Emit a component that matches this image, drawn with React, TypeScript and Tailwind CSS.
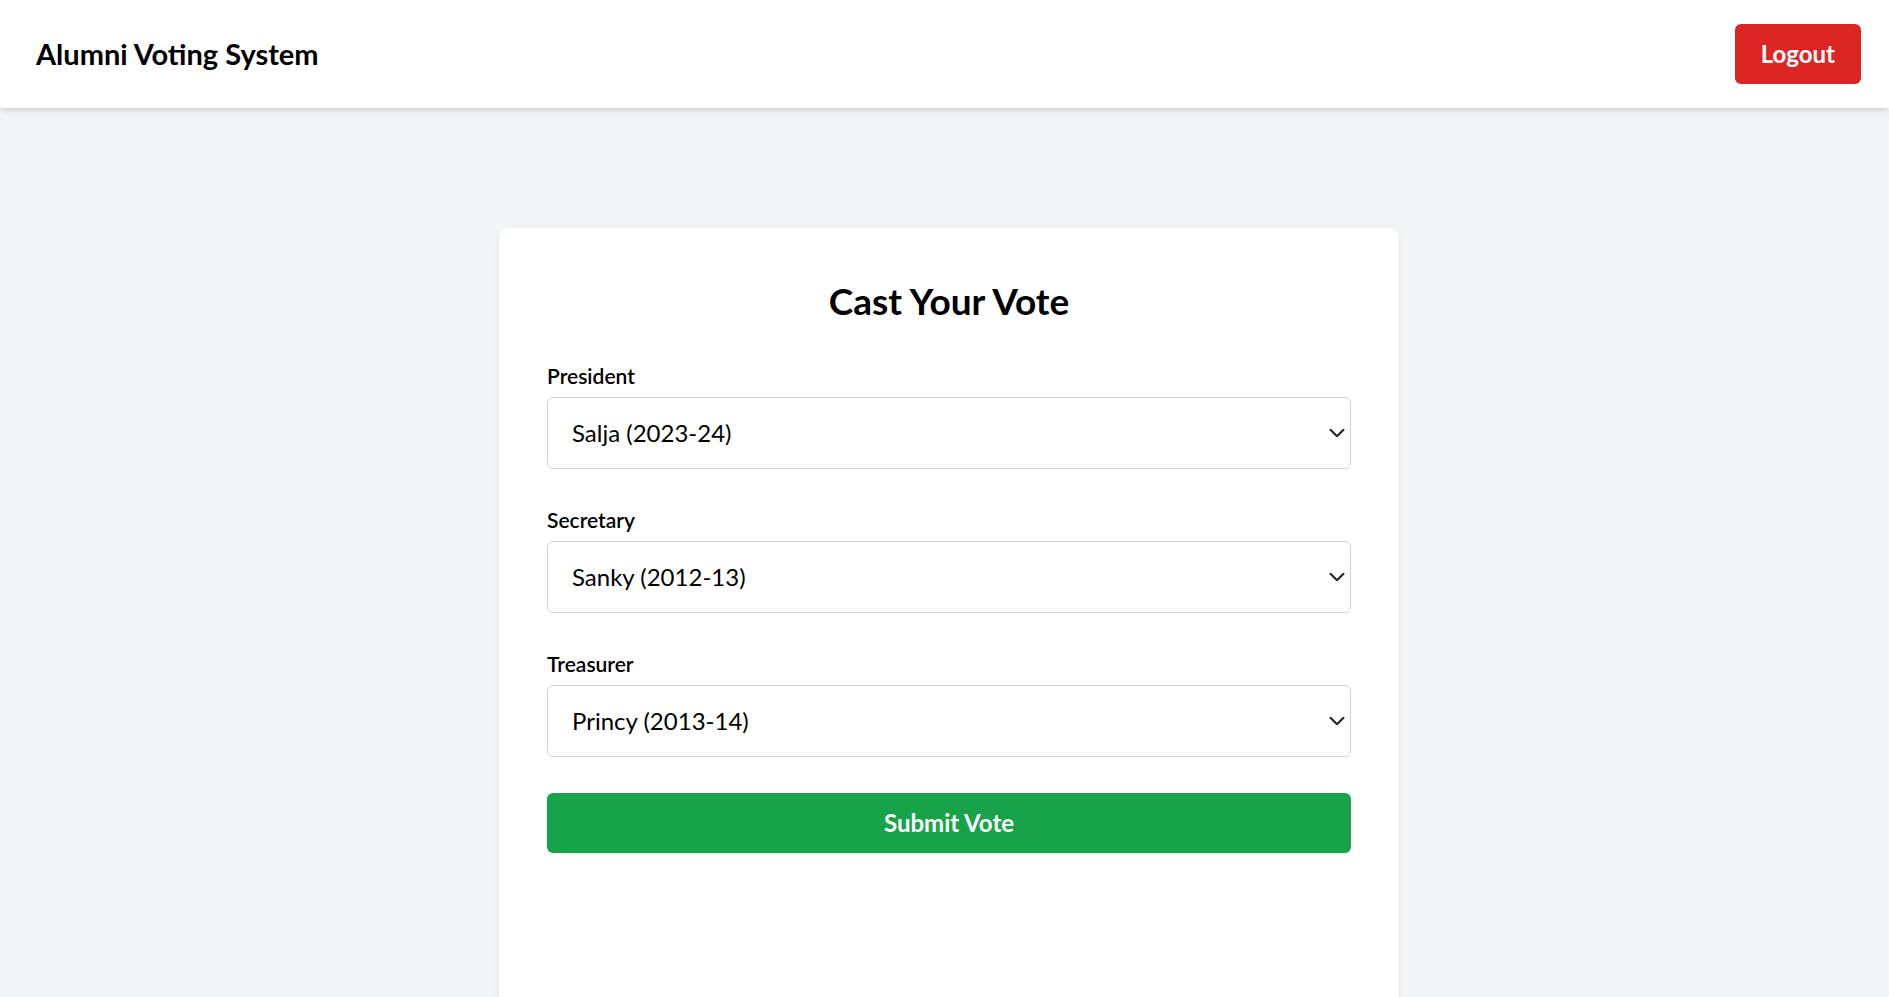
import { ChevronDown } from "lucide-react";

const positions = [
  { label: "President", value: "Salja (2023-24)", options: ["Salja (2023-24)", "Arun (2019-20)", "Meera (2017-18)"] },
  { label: "Secretary", value: "Sanky (2012-13)", options: ["Sanky (2012-13)", "Joseph (2015-16)", "Anu (2020-21)"] },
  { label: "Treasurer", value: "Princy (2013-14)", options: ["Princy (2013-14)", "Rahul (2016-17)", "Divya (2018-19)"] },
];

export default function App() {
  return (
    <div className="min-h-screen bg-[#f3f4f6] font-['Lato','Open_Sans',sans-serif] text-black">
      {/* Top bar */}
      <header className="flex items-center justify-between bg-white pl-9 pr-7 py-6 shadow-md">
        <h1 className="text-[29px] leading-[42px] font-bold">Alumni Voting System</h1>
        <button className="rounded-[6px] bg-[#dc2626] px-[26px] py-3 text-[24px] leading-[36px] font-bold text-white">
          Logout
        </button>
      </header>

      {/* Ballot card */}
      <main className="flex justify-center pt-[120px]">
        <div className="ml-[9px] w-[900px] min-h-[820px] rounded-[9px] bg-white px-12 pb-12 pt-[49px] shadow-md">
          <h2 className="mb-9 text-center text-[37px] leading-[48px] font-bold">Cast Your Vote</h2>

          {positions.map((p) => (
            <div key={p.label} className="mb-9">
              <label className="mb-[6px] block text-[21px] leading-[30px] font-semibold">{p.label}</label>
              <div className="relative">
                <select
                  defaultValue={p.value}
                  className="h-[72px] w-full appearance-none rounded-[6px] border-[1.5px] border-[#d1d5db] bg-white pl-6 pr-12 text-[24px] text-black outline-none"
                >
                  {p.options.map((o) => (
                    <option key={o}>{o}</option>
                  ))}
                </select>
                <ChevronDown
                  size={26}
                  strokeWidth={1.9}
                  className="pointer-events-none absolute right-[1px] top-1/2 -translate-y-1/2 text-[#222]"
                />
              </div>
            </div>
          ))}

          <button className="h-[60px] w-full rounded-[6px] bg-[#16a34a] text-[24px] font-bold text-white">
            Submit Vote
          </button>
        </div>
      </main>
    </div>
  );
}
